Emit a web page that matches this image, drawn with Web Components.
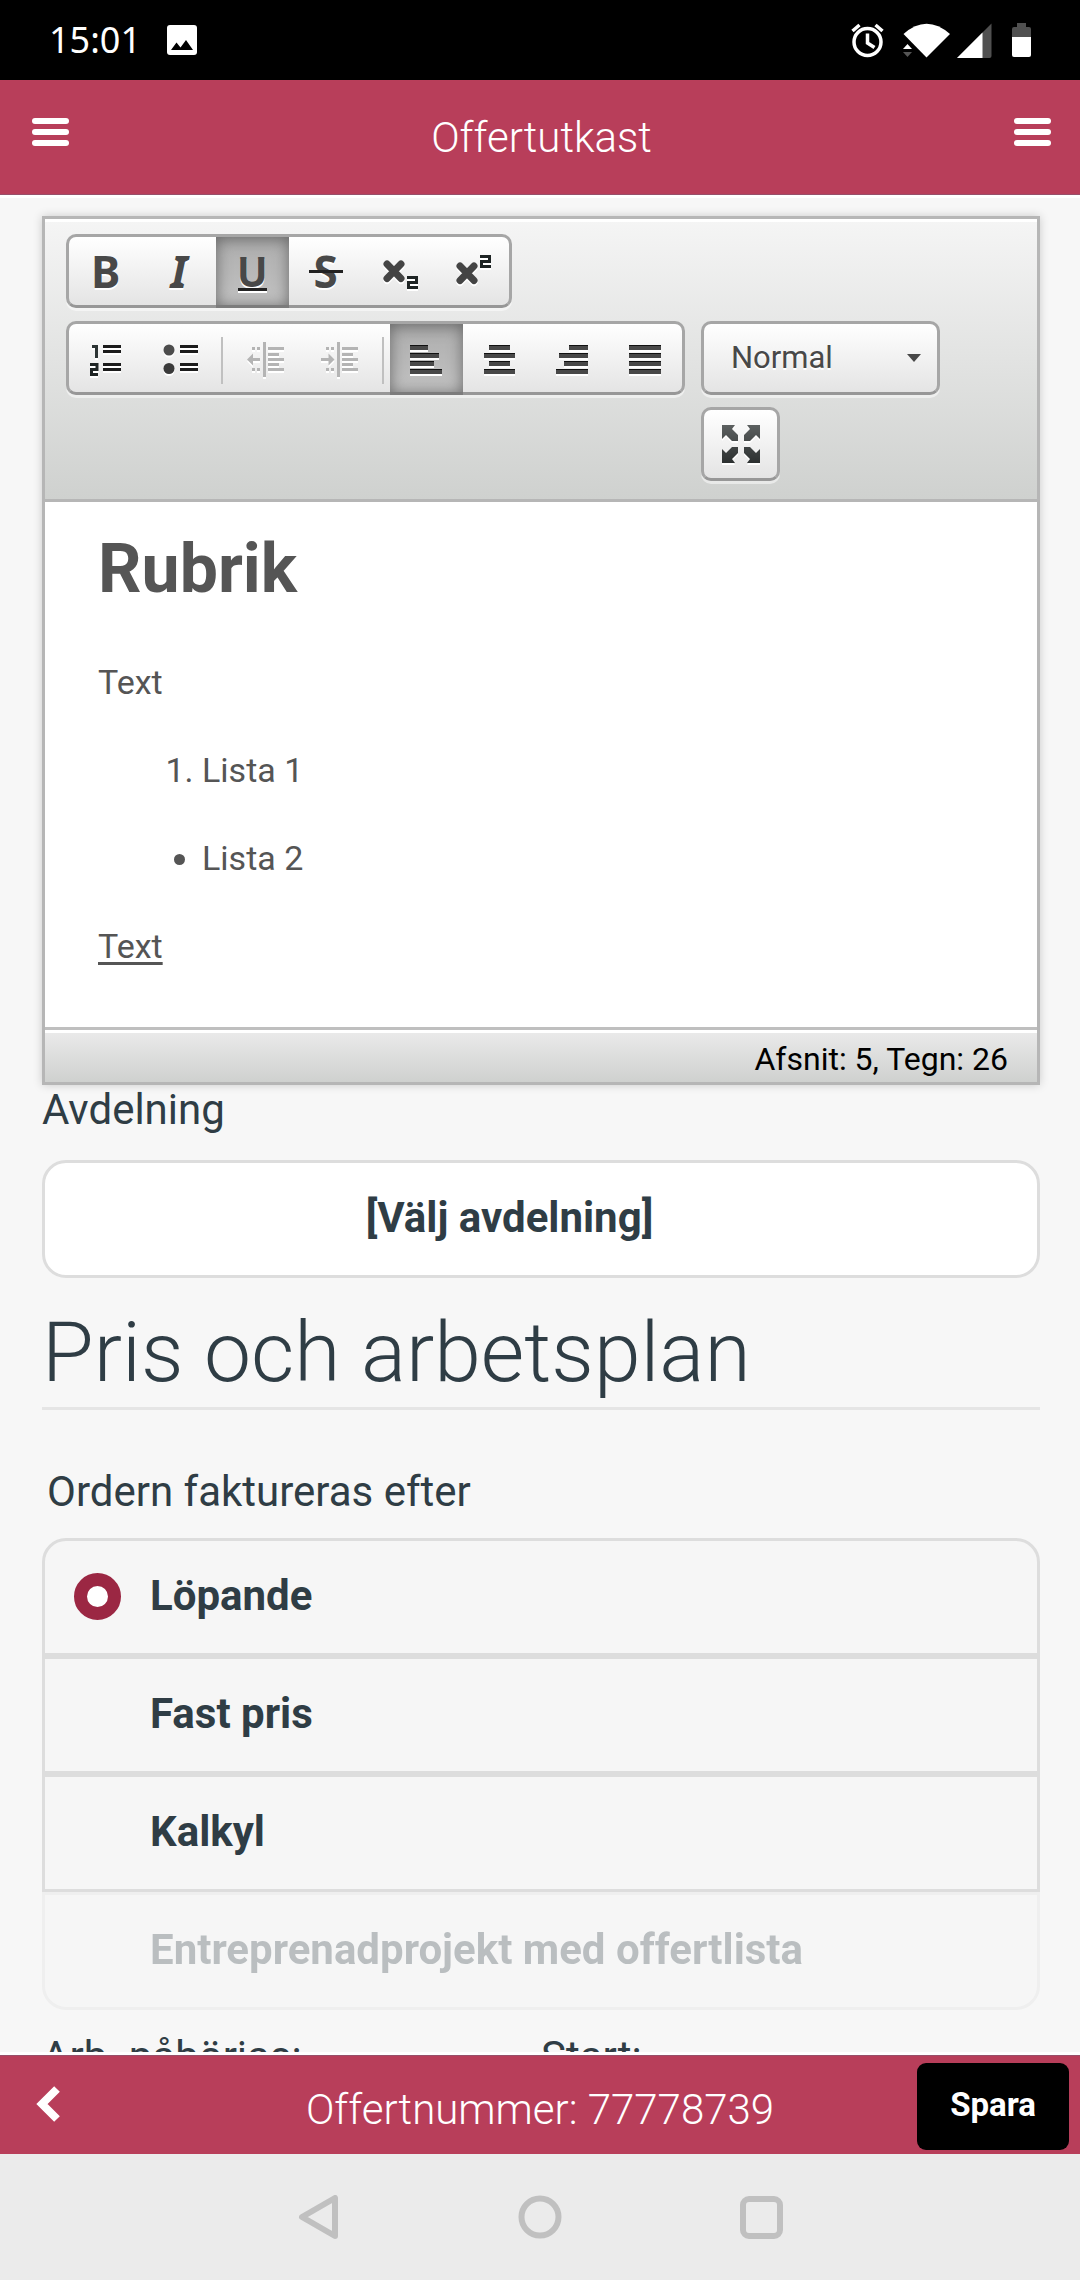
<!DOCTYPE html>
<html lang="sv">
<head>
<meta charset="utf-8">
<meta name="viewport" content="width=device-width, initial-scale=1">
<title>Offertutkast</title>
<style>
  html, body { margin: 0; height: 100%; }
  body { font-family: Roboto, "Liberation Sans", sans-serif; font-size: 42px; line-height: 50px; color: #2f3d45; background: #f7f7f7; }
</style>
</head>
<body>
<offer-app></offer-app>

<script>
const define = (name, html, setup) => customElements.define(name, class extends HTMLElement {
  constructor() {
    super();
    const t = document.createElement('template');
    t.innerHTML = html;
    this.attachShadow({ mode: 'open' }).append(t.content.cloneNode(true));
  }
  connectedCallback() { if (setup) setup(this, this.shadowRoot); }
});

/* Android status bar */
define('status-bar', `
<style>
  :host { display: flex; align-items: center; justify-content: space-between; flex: none; height: 80px; padding: 0 49px; background: #000; color: #fff; box-sizing: border-box;
    font: 36px/52px "Noto Sans", sans-serif; }
  div { display: flex; align-items: center; }
  .l { gap: 26px; }
  svg { display: block; }
</style>
<div class="l"><span>15:01</span>
  <svg width="30" height="30" viewBox="0 0 30 30"><rect width="30" height="30" rx="3" fill="#fff"/><path d="M4 25 9.500 17.500 13.500 22.500 19 15 26 25z" fill="#000"/></svg>
</div>
<div>
  <svg width="180" height="36" viewBox="851 22 180 36">
    <g fill="none" stroke="#fff" stroke-width="3.500"><circle cx="867.500" cy="42" r="13.500"/><path d="M867.500 33.500V43l7 4.500M852.500 31l7-6M882.500 31l-7-6"/></g>
    <path d="M903.500 34Q926.500 13.500 950 34L926.500 57.500z" fill="#fff"/>
    <path d="M902.500 43.500 911.500 53H902.500z" fill="#000"/>
    <path d="M903 49h9l-4.500-5z" fill="#fff"/><path d="M903 52h9l-4.500 5z" fill="#555"/>
    <path d="M957 58 991.500 23.500V56q0 2-2 2z" fill="#505050"/><path d="M957 58 982.500 32.500V58z" fill="#fff"/>
    <path d="M1012 38V29q0-2 2-2h3v-4h9v4h3q2 0 2 2v9z" fill="#505050"/><path d="M1012 37h19v18q0 2-2 2h-15q-2 0-2-2z" fill="#fff"/>
  </svg>
</div>`);

/* Bar with a left slot, a centred title and a right slot */
define('title-bar', `
<style>
  :host { display: grid; grid-template-columns: 1fr auto 1fr; align-items: center; flex: none; background: #b83e5a; color: #fff; font-weight: 300; box-sizing: border-box; }
  h1 { margin: 0; font-size: 42px; line-height: 50px; font-weight: 300; }
  .end { justify-self: end; }
</style>
<div><slot name="start"></slot></div><h1><slot></slot></h1><div class="end"><slot name="end"></slot></div>`);

define('menu-button', `
<style>
  :host { display: block; }
  button { display: block; border: 0; padding: 0 0 12px; background: none; }
  svg { display: block; }
</style>
<button type="button" aria-label="Meny"><svg width="37" height="28" viewBox="0 0 37 28" fill="#fff"><rect width="37" height="6" rx="3"/><rect y="11" width="37" height="6" rx="3"/><rect y="22" width="37" height="6" rx="3"/></svg></button>`);

/* Toolbar icons, drawn in a 48px box */
const rows = (fill, list) => list.map(([x, y, w, h]) => `<rect x="${x}" y="${y}" width="${w}" height="${h}" fill="${fill}"/>`).join('');
const bars = spans => spans.map(([a, b], i) => `<rect x="${a}" y="${11 + i * 8}" width="${b - a}" height="5" fill="#484848"/><rect x="${a}" y="${11 + i * 8}" width="${b - a}" height="1" fill="#111"/>`).join('');
const listLines = (x, w) => rows('#1c1c1c', [[x, 11, w, 3], [x, 16, w, 3], [x, 29, w, 3], [x, 34, w, 3]]);
const two = (x, y) => `<path d="M${x} ${y + 1.5}h9.500v5h-8v5h9.500" fill="none" stroke="#1e2424" stroke-width="3"/>`;
const cross = (x, y) => `<path d="M${x} ${y}l14 14.500m0-14.500l-14 14.500" stroke="#444" stroke-width="7" stroke-linecap="round"/>`;
const dent = (o, arrow) => rows('#b4b4b4', [[21 + o, 8, 3, 35], [26 + o, 13, 16, 3], [26 + o, 19, 11, 3], [26 + o, 24, 16, 3], [26 + o, 29, 11, 3], [26 + o, 34, 16, 3],
  [10 + o, 13, 3, 3], [15 + o, 13, 3, 3], [10 + o, 34, 3, 3], [15 + o, 34, 3, 3]]) + `<path d="${arrow}" fill="#b4b4b4"/>`;
const icons = {
  sub: cross(12, 17) + two(32, 29),
  sup: cross(12, 19) + two(32, 8),
  num: `<path d="M10 12.500h4.500V24" fill="none" stroke="#2c3434" stroke-width="3"/><path d="M8 30.500h7v5H9.500v5H16" fill="none" stroke="#1e2424" stroke-width="3"/>` + listLines(21, 18),
  bul: `<circle cx="14" cy="16" r="5.500" fill="#4c4c4c"/><circle cx="14" cy="34.500" r="5.500" fill="#3a3a3a"/>` + listLines(25, 18),
  out: dent(0, 'M5 25.500l6-6v4.500h7v3h-7v4.500z'),
  ind: dent(1, 'M19.500 25.500l-6-6v4.500H6v3h7.500v4.500z'),
  left: bars([[8, 26], [8, 37], [8, 32], [8, 40]]),
  center: bars([[14, 35], [9, 40], [14, 35], [9, 40]]),
  right: bars([[21, 40], [11, 40], [16, 40], [8, 40]]),
  just: bars([[8, 40], [8, 40], [8, 40], [8, 40]]),
  max: `<defs><linearGradient id="g" gradientUnits="userSpaceOnUse" x1="0" y1="5" x2="0" y2="43"><stop stop-color="#5c6060"/><stop offset="1" stop-color="#2c3030"/></linearGradient></defs><g fill="url(#g)"><path d="M5 5h13l-3 4 6 6v6h-6l-6-6-4 4z"/><path d="M43 5H30l3 4-6 6v6h6l6-6 4 4z"/><path d="M5 43h13l-3-4 6-6v-6h-6l-6 6-4-4z"/><path d="M43 43H30l3-4-6-6v-6h6l6 6 4-4z"/></g>`
};

define('tool-button', `
<style>
  :host { display: flex; flex: 1 0 73px; }
  button { display: grid; place-items: center; flex: 1; height: 68px; border: 0; padding: 0; background: none; color: #484848; font: bold 44px/48px "Noto Sans", sans-serif; }
  :host([active]) { margin-bottom: -3px; }
  :host([active]) button { height: 71px; background: linear-gradient(#adadad, #c2c2c2); box-shadow: inset 0 2px 15px #666; border-bottom: 3px solid #7c7c7c; box-sizing: border-box; }
  svg { display: block; filter: drop-shadow(0 2px 0 #fff); }
  .ch { display: grid; place-items: center; text-shadow: 0 2px #fff; }
  .ch > * { grid-area: 1 / 1; }
  i { font-style: italic; }
  .u { font-size: 41px; line-height: 48px; padding-bottom: 1px; }
  .bar { width: 29px; height: 3px; background: #222; box-shadow: 0 2px #fff; align-self: end; margin-bottom: 5px; }
  .strike { width: 34px; height: 3px; background: #222; }
</style>
<button type="button"></button>`, (el, root) => {
  const b = root.querySelector('button'), k = el.getAttribute('icon');
  const letters = { b: '<span class="ch">B</span>', i: '<span class="ch"><i>I</i></span>',
    u: '<span class="ch"><span class="u">U</span><span class="bar"></span></span>',
    s: '<span class="ch"><span>S</span><span class="strike"></span></span>' };
  b.setAttribute('aria-label', el.getAttribute('name'));
  b.disabled = el.hasAttribute('off');
  b.innerHTML = letters[k] || `<svg width="48" height="48" viewBox="0 0 48 48">${icons[k]}</svg>`;
});

define('tool-group', `
<style>
  :host { display: flex; box-sizing: border-box; height: 74px; border: 3px solid #a6a6a6; border-bottom-color: #979797; border-radius: 10px;
    background: linear-gradient(#fff, #e4e4e4); box-shadow: 0 3px rgba(255,255,255,.5); }
  ::slotted(hr) { width: 2px; height: 47px; margin: 13px 6px 0; border: 0; background: #c0c0c0; flex: none; }
</style><slot></slot>`);

define('format-select', `
<style>
  :host { display: grid; align-items: center; width: 233px; }
  select, svg { grid-area: 1 / 1; }
  select { appearance: none; width: 100%; height: 68px; padding: 0 27px; border: 0; background: none; color: #484848; font: 31px/36px Roboto, sans-serif; text-shadow: 0 2px #fff; }
  svg { justify-self: end; margin-right: 16px; pointer-events: none; }
</style>
<select aria-label="Format"><option>Normal</option></select>
<svg width="14" height="8" viewBox="0 0 14 8"><path d="M0 0h14L7 8z" fill="#484848"/></svg>`);

define('rich-editor', `
<style>
  :host { display: block; border: 3px solid #b6b6b6; box-shadow: 0 0 9px rgba(0,0,0,.18); background: #fff; }
  .bar { display: flex; flex-direction: column; align-items: flex-start; gap: 13px; padding: 15px 21px 18px; border-bottom: 3px solid #b6b6b6;
    background: linear-gradient(#f5f5f5, #cfd1cf); box-shadow: inset 0 3px #fff; }
  .line { display: flex; gap: 16px; }
  .col { display: flex; flex-direction: column; align-items: flex-start; gap: 12px; }
  .six { width: 446px; }
  .ten { width: 619px; }
  .one { width: 79px; }
  .body { padding: 26px 53px 54px; color: #555; font-size: 34px; line-height: 54px; outline: 0; }
  h1 { margin: 0 0 44px; font-size: 68px; line-height: 83px; }
  p, ol, ul { margin: 0 0 34px; }
  ol, ul { padding-left: 104px; }
  p:last-child { margin: 0; }
  u { text-underline-offset: 4px; text-decoration-thickness: 3px; }
  .foot { padding: 9px 29px 3px; border-top: 3px solid #bfbfbf; background: linear-gradient(#ebebeb, #cfd1cf); box-shadow: inset 0 3px #fff; color: #000; text-align: right; font-size: 32px; line-height: 40px; }
</style>
<div class="bar">
  <tool-group class="six"><tool-button icon="b" name="Fet"></tool-button><tool-button icon="i" name="Kursiv"></tool-button><tool-button icon="u" name="Understruken" active></tool-button><tool-button icon="s" name="Genomstruken"></tool-button><tool-button icon="sub" name="Nedsänkt"></tool-button><tool-button icon="sup" name="Upphöjd"></tool-button></tool-group>
  <div class="line">
    <tool-group class="ten"><tool-button icon="num" name="Numrerad lista"></tool-button><tool-button icon="bul" name="Punktlista"></tool-button><hr><tool-button icon="out" name="Minska indrag" off></tool-button><tool-button icon="ind" name="Öka indrag" off></tool-button><hr><tool-button icon="left" name="Vänster" active></tool-button><tool-button icon="center" name="Centrera"></tool-button><tool-button icon="right" name="Höger"></tool-button><tool-button icon="just" name="Marginaljustera"></tool-button></tool-group>
    <div class="col">
      <tool-group><format-select></format-select></tool-group>
      <tool-group class="one"><tool-button icon="max" name="Maximera"></tool-button></tool-group>
    </div>
  </div>
</div>
<div class="body" contenteditable="true" spellcheck="false" role="textbox" aria-multiline="true" aria-label="Text"><h1>Rubrik</h1><p>Text</p><ol><li>Lista 1</li></ol><ul><li>Lista 2</li></ul><p><u>Text</u></p></div>
<div class="foot">Afsnit: 5, Tegn: 26</div>`);

define('select-field', `
<style>
  :host { display: block; }
  label { display: block; margin-bottom: 25px; }
  select { display: block; appearance: none; box-sizing: border-box; width: 100%; height: 118px; padding: 0 63px 3px 0; border: 3px solid #ddd; border-radius: 24px; background: #fff; color: inherit; font: bold 42px/50px Roboto, sans-serif; text-align: center; text-align-last: center; }
</style>
<label for="s">Avdelning</label>
<select id="s"><option>[Välj avdelning]</option></select>`);

define('section-title', `
<style>
  :host { display: block; margin-top: 25px; padding-bottom: 4px; border-bottom: 3px solid #e5e5e5; }
  h2 { margin: 0; font-size: 84px; line-height: 100px; font-weight: 300; }
</style><h2><slot></slot></h2>`);

define('radio-list', `
<style>
  :host { display: block; margin-top: 57px; }
  fieldset { margin: 0; padding: 0; border: 0; min-width: 0; }
  legend { padding: 0 0 21px 5px; }
  label { display: flex; align-items: center; gap: 29px; box-sizing: border-box; height: 118px; padding: 0 29px 2px; border: 3px solid #ddd; background: #f6f6f6; font-weight: 700; }
  label:first-of-type { border-radius: 24px 24px 0 0; }
  label:last-of-type { border-radius: 0 0 24px 24px; }
  label.off { opacity: .3; }
  input { appearance: none; flex: none; width: 47px; height: 47px; margin: 0; border-radius: 50%; }
  input:checked { border: 13px solid #9b2743; background: #fff; }
</style>
<fieldset>
  <legend>Ordern faktureras efter</legend>
  <label><input type="radio" name="m" checked>Löpande</label>
  <label><input type="radio" name="m">Fast pris</label>
  <label><input type="radio" name="m">Kalkyl</label>
  <label class="off"><input type="radio" name="m" disabled>Entreprenadprojekt med offertlista</label>
</fieldset>`);

define('date-fields', `
<style>
  :host { display: grid; grid-template-columns: 1fr 1fr; margin-top: 22px; }
  label { display: block; }
  input { box-sizing: border-box; width: 90%; height: 118px; margin-top: 25px; border: 3px solid #ddd; border-radius: 24px; background: #fff; }
</style>
<div><label for="a">Arb. påbörjas:</label><input id="a"></div>
<div><label for="b">Start:</label><input id="b"></div>`);

define('system-nav', `
<style>
  :host { display: flex; align-items: center; justify-content: center; gap: 177px; flex: none; height: 126px; background: #ebebeb; }
  button { display: block; padding: 0; border: 0; background: none; }
  svg { display: block; fill: none; stroke: #c0c0c0; stroke-width: 6; stroke-linejoin: round; }
</style>
<button type="button" aria-label="Tillbaka"><svg width="44" height="44" viewBox="0 0 44 44"><path d="M5 22 38 3V41z"/></svg></button>
<button type="button" aria-label="Hem"><svg width="44" height="44" viewBox="0 0 44 44"><circle cx="22" cy="22" r="18.500"/></svg></button>
<button type="button" aria-label="Appar"><svg width="44" height="44" viewBox="0 0 44 44"><rect x="4" y="4" width="37" height="37" rx="6"/></svg></button>`);

define('offer-app', `
<style>
  :host { display: flex; flex-direction: column; height: 100vh; }
  .top { height: 118px; padding: 0 29px 0 32px; border-bottom: 3px solid #fff; box-shadow: inset 0 -1px #97506a; }
  main { flex: 1; min-height: 0; overflow: auto; scrollbar-width: none; padding: 18px 40px 0 42px; }
  .bottom { height: 102px; padding: 3px 11px 0; border-top: 3px solid #fff; box-shadow: inset 0 1px #97506a; }
  .bottom span { display: block; padding-top: 7px; }
  button { display: block; padding: 0; border: 0; }
  .back { padding: 0 0 4px 25px; background: none; }
  .back svg { display: block; }
  .save { height: 87px; padding: 0 33px 3px; border-radius: 9px; background: #000; color: #fff; font: bold 33px/40px Roboto, sans-serif; }
</style>
<status-bar></status-bar>
<title-bar class="top"><menu-button slot="start"></menu-button>Offertutkast<menu-button slot="end"></menu-button></title-bar>
<main>
  <rich-editor></rich-editor>
  <select-field></select-field>
  <section-title>Pris och arbetsplan</section-title>
  <radio-list></radio-list>
  <date-fields></date-fields>
</main>
<title-bar class="bottom">
  <button class="back" slot="start" type="button" aria-label="Tillbaka"><svg width="24" height="38" viewBox="0 0 24 38"><path d="M21 4 6 19 21 34" fill="none" stroke="#fff" stroke-width="8"/></svg></button>
  <span>Offertnummer: 77778739</span>
  <button class="save" slot="end" type="button">Spara</button>
</title-bar>
<system-nav></system-nav>`);
</script>
</body>
</html>
